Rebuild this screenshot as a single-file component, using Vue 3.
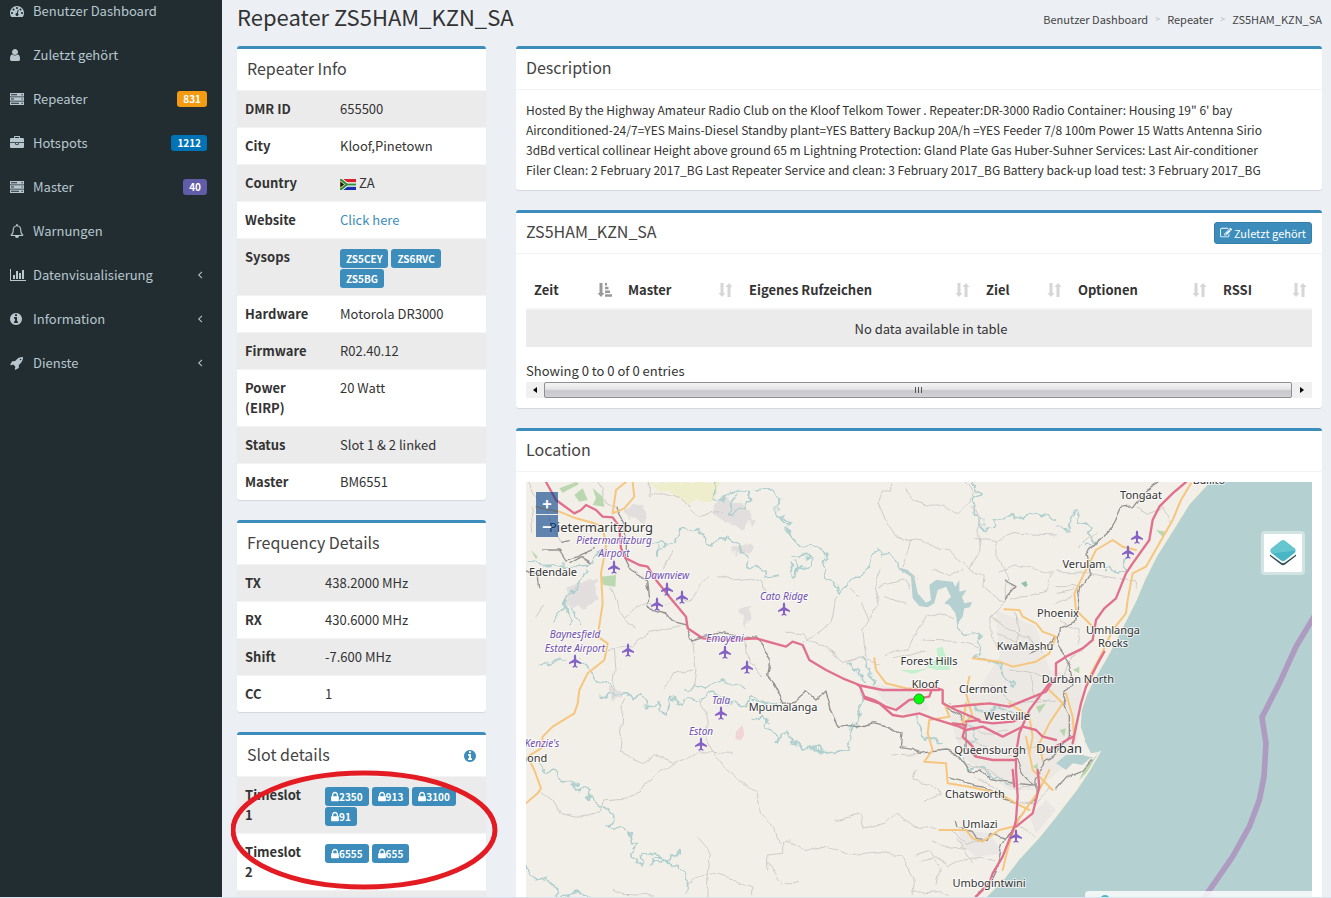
<script setup>
import { h } from 'vue'

// [viewBox, path]
const icons = {
  dashboard: ['0 0 1792 1792', 'M384 1152q0-53-37.5-90.5t-90.5-37.5-90.5 37.5-37.5 90.5 37.5 90.5 90.5 37.5 90.5-37.5 37.5-90.5zm192-448q0-53-37.5-90.5t-90.5-37.5-90.5 37.5-37.5 90.5 37.5 90.5 90.5 37.5 90.5-37.5 37.5-90.5zm428 481l101-382q6-26-7.5-48.5t-38.5-29.5-48 6.5-30 39.5l-101 382q-60 5-107 43.5t-63 98.5q-20 77 20 146t117 89 146-20 89-117q16-60-6-117t-72-91zm660-33q0-53-37.5-90.5t-90.5-37.5-90.5 37.5-37.5 90.5 37.5 90.5 90.5 37.5 90.5-37.5 37.5-90.5zm-640-640q0-53-37.5-90.5t-90.5-37.5-90.5 37.5-37.5 90.5 37.5 90.5 90.5 37.5 90.5-37.5 37.5-90.5zm448 192q0-53-37.5-90.5t-90.5-37.5-90.5 37.5-37.5 90.5 37.5 90.5 90.5 37.5 90.5-37.5 37.5-90.5zm320 448q0 261-141 483-19 29-54 29h-1402q-35 0-54-29-141-221-141-483 0-182 71-348t191-286 286-191 348-71 348 71 286 191 191 286 71 348z'],
  user: ['256 0 1280 1792', 'M1536 1399q0 109-62.5 187t-150.5 78h-854q-88 0-150.5-78t-62.5-187q0-85 8.5-160.5t31.5-152 58.5-131 94-89 134.5-34.5q131 128 313 128t313-128q76 0 134.5 34.5t94 89 58.5 131 31.5 152 8.5 160.5zm-256-887q0 159-112.5 271.5t-271.5 112.5-271.5-112.5-112.5-271.5 112.5-271.5 271.5-112.5 271.5 112.5 112.5 271.5z'],
  server: ['0 0 14 14', 'M0 1h14v3.4H0zM1 2.2v1h6v-1zM11.5 2.1v1.2h1.2V2.1zM0 5.3h14v3.4H0zM1 6.5v1h3v-1zM11.5 6.4v1.2h1.2V6.4zM0 9.6h14V13H0zM1 10.8v1h8v-1zM11.5 10.7v1.2h1.2v-1.2z'],
  briefcase: ['0 0 1792 1792', 'M640 256h512v-128h-512v128zm1152 640v480q0 66-47 113t-113 47h-1472q-66 0-113-47t-47-113v-480h672v160q0 26 19 45t45 19h320q26 0 45-19t19-45v-160h672zm-768 0v128h-256v-128h256zm768-480v384h-1792v-384q0-66 47-113t113-47h352v-160q0-40 28-68t68-28h576q40 0 68 28t28 68v160h352q66 0 113 47t47 113z'],
  bell: ['0 0 14 14', 'M7 0a.9.9 0 0 1 .9.9v.5C10.200 1.800 11.300 3.500 11.300 5.700c0 2.700.8 3.900 2.200 5.100 0 .7-.4 1.100-1 1.100H9A2 2 0 0 1 5 11.900H1.500c-.6 0-1-.4-1-1.100C1.900 9.600 2.700 8.400 2.700 5.700 2.700 3.500 3.800 1.800 6.100 1.400V.9A.9.900 0 0 1 7 0zM2.200 10.900h9.600C10.700 9.700 10.200 8.100 10.200 5.700 10.200 3.600 9 2.300 7 2.300S3.800 3.600 3.800 5.700C3.800 8.100 3.300 9.700 2.200 10.900z'],
  chart: ['0 0 2048 1792', 'M640 896v512h-256v-512h256zm384-512v1024h-256v-1024h256zm1024 1152v128h-2048v-1536h128v1408h1920zm-640-896v768h-256v-768h256zm384-384v1152h-256v-1152h256z'],
  info: ['128 0 1536 1792', 'M1152 1376v-160q0-14-9-23t-23-9h-96v-512q0-14-9-23t-23-9h-320q-14 0-23 9t-9 23v160q0 14 9 23t23 9h96v320h-96q-14 0-23 9t-9 23v160q0 14 9 23t23 9h448q14 0 23-9t9-23zm-128-896v-160q0-14-9-23t-23-9h-192q-14 0-23 9t-9 23v160q0 14 9 23t23 9h192q14 0 23-9t9-23zm640 416q0 209-103 385.5t-279.500 279.500-385.500 103-385.500-103-279.500-279.500-103-385.500 103-385.500 279.500-279.500 385.500-103 385.500 103 279.500 279.500 103 385.500z'],
  rocket: ['0 0 1792 1792', 'M1440 448q0-40-28-68t-68-28-68 28-28 68 28 68 68 28 68-28 28-68zm224-288q0 249-75.5 430.5t-253.5 360.5q-81 80-195 176l-20 379q-2 16-16 26l-384 224q-7 4-16 4-12 0-23-9l-64-64q-13-14-8-32l85-276-281-281-276 85q-3 1-9 1-14 0-23-9l-64-64q-17-19-5-39l224-384q10-14 26-16l379-20q96-114 176-195 188-187 358-258t431-71q14 0 24 9.5t10 22.5z'],
  lock: ['320 0 1152 1792', 'M640 768h512v-192q0-106-75-181t-181-75-181 75-75 181v192zm832 96v576q0 40-28 68t-68 28h-960q-40 0-68-28t-28-68v-576q0-40 28-68t68-28h32v-192q0-184 132-316t316-132 316 132 132 316v192h32q40 0 68 28t28 68z'],
  edit: ['0 0 1792 1792', 'M888 1184l116-116-152-152-116 116v56h96v96h56zm440-720q-16-16-33 1l-350 350q-17 17-1 33t33-1l350-350q17-17 1-33zm80 594v190q0 119-84.5 203.5t-203.5 84.5h-832q-119 0-203.5-84.5t-84.5-203.5v-832q0-119 84.5-203.5t203.5-84.5h832q63 0 117 25 15 7 18 23 3 17-9 29l-49 49q-14 14-32 8-23-6-45-6h-832q-66 0-113 47t-47 113v832q0 66 47 113t113 47h832q66 0 113-47t47-113v-126q0-13 9-22l64-64q15-15 35-7t20 29zm-96-738l288 288-672 672h-288v-288zm444 132l-92 92-288-288 92-92q28-28 68-28t68 28l152 152q28 28 28 68t-28 68z'],
  angle: ['0 0 6 14', 'M4.600 3.500l.7.7L2.500 7l2.800 2.800-.7.7L1 7z'],
  sort: ['0 0 15 14', 'M2.500 0h3v10h2L4 14 .500 10h2zM9.500 14h3V4h2L11 0 7.500 4h2z'],
  sorted: ['0 0 15 14', 'M2.500 0h3v10h2L4 14 .500 10h2zM8 0h2v2.500H8zM8 3.700h3.500v2.500H8zM8 7.400h5v2.500H8zM8 11.200h7v2.500H8z'],
}

const Icon = (props) => {
  const [viewBox, d] = icons[props.name]
  const [, , w, hgt] = viewBox.split(' ').map(Number)
  return h('svg', {
    viewBox,
    width: Math.round((props.size * w) / hgt),
    height: props.size,
    fill: 'currentColor',
    'aria-hidden': 'true',
  }, [h('path', { d, 'fill-rule': 'evenodd' })])
}
Icon.props = ['name', 'size']

const menu = [
  { icon: 'dashboard', text: 'Benutzer Dashboard' },
  { icon: 'user', text: 'Zuletzt gehört' },
  { icon: 'server', text: 'Repeater', count: 831, color: 'orange' },
  { icon: 'briefcase', text: 'Hotspots', count: 1212, color: 'blue' },
  { icon: 'server', text: 'Master', count: 40, color: 'purple' },
  { icon: 'bell', text: 'Warnungen' },
  { icon: 'chart', text: 'Datenvisualisierung', tree: true },
  { icon: 'info', text: 'Information', tree: true },
  { icon: 'rocket', text: 'Dienste', tree: true },
]

const info = [
  { label: 'DMR ID', value: '655500' },
  { label: 'City', value: 'Kloof,Pinetown' },
  { label: 'Country', value: 'ZA', flag: true },
  { label: 'Website', value: 'Click here', link: true },
  { label: 'Sysops', tags: ['ZS5CEY', 'ZS6RVC', 'ZS5BG'] },
  { label: 'Hardware', value: 'Motorola DR3000' },
  { label: 'Firmware', value: 'R02.40.12' },
  { label: 'Power\n(EIRP)', value: '20 Watt' },
  { label: 'Status', value: 'Slot 1 & 2 linked' },
  { label: 'Master', value: 'BM6551' },
]

const freq = [
  { label: 'TX', value: '438.2000 MHz' },
  { label: 'RX', value: '430.6000 MHz' },
  { label: 'Shift', value: '-7.600 MHz' },
  { label: 'CC', value: '1' },
]

const slots = [
  { label: 'Timeslot\n1', groups: [2350, 913, 3100, 91] },
  { label: 'Timeslot\n2', groups: [6555, 655] },
]

const description = [
  'Hosted By the Highway Amateur Radio Club on the Kloof Telkom Tower . Repeater:DR-3000 Radio Container: Housing 19" 6\' bay',
  'Airconditioned-24/7=YES Mains-Diesel Standby plant=YES Battery Backup 20A/h =YES Feeder 7/8 100m Power 15 Watts Antenna Sirio',
  '3dBd vertical collinear Height above ground 65 m Lightning Protection: Gland Plate Gas Huber-Suhner Services: Last Air-conditioner',
  'Filer Clean: 2 February 2017_BG Last Repeater Service and clean: 3 February 2017_BG Battery back-up load test: 3 February 2017_BG',
].join('\n')

const columns = [
  { name: 'Zeit', width: 94, sorted: true },
  { name: 'Master', width: 121 },
  { name: 'Eigenes Rufzeichen', width: 237 },
  { name: 'Ziel', width: 92 },
  { name: 'Optionen', width: 145 },
  { name: 'RSSI', width: 97 },
]

const places = [
  ['Pietermaritzburg', 75, 50, 'city'],
  ['Edendale', 27, 94],
  ['Tongaat', 615, 17],
  ['Ballito', 683, 2],
  ['Verulam', 558, 86],
  ['Phoenix', 532, 135],
  ['KwaMashu', 499, 168],
  ['Umhlanga', 587, 152],
  ['Rocks', 587, 165],
  ['Forest Hills', 403, 183],
  ['Durban North', 552, 201],
  ['Kloof', 399, 206],
  ['Clermont', 457, 211],
  ['Westville', 481, 238],
  ['Queensburgh', 464, 272],
  ['Durban', 533, 271, 'city'],
  ['Chatsworth', 449, 316],
  ['Umlazi', 454, 346],
  ['Umbogintwini', 463, 405],
  ['Mpumalanga', 257, 229],
  ['mond', 6, 280],
  ['Pietermaritzburg', 88, 62, 'air'],
  ['Airport', 88, 75, 'air'],
  ['Dawnview', 141, 97, 'air'],
  ['Cato Ridge', 258, 118, 'air'],
  ['Emoyeni', 199, 160, 'air'],
  ['Baynesfield', 49, 156, 'air'],
  ['Estate Airport', 49, 170, 'air'],
  ['Tala', 195, 222, 'air'],
  ['Eston', 175, 253, 'air'],
  ["Kenzie's", 16, 265, 'air'],
]

const planes = [
  [88, 85], [141, 107], [131, 122], [156, 115], [258, 127], [102, 168], [49, 179],
  [199, 170], [221, 185], [195, 231], [175, 262], [611, 55], [602, 70], [490, 354],
]

const rivers = [
  'M600 36L595 80 620 95 650 60 700 65 690 120 640 130 660 70 M720 60L770 55 800 80 780 120 815 160 830 155 810 145',
  'M400 225L480 215 485 170 520 180 560 190 575 220 620 215 640 195 660 215 690 260 705 300 735 295 750 315 790 310 M425 225V255L440 230',
  'M810 170L830 215 860 230 910 225 935 265 920 290 925 320 960 345 970 375 990 340 1030 320 1060 285 1065 250 1090 240 1100 260 1130 250 1145 290 1165 300',
  'M830 255L885 265 890 285 840 310 835 270 M820 280L830 320 860 290',
  'M1375 36L1395 70 1375 100 1375 135 1400 145 1395 175 1425 180 1445 165 1440 150 1500 140 1520 132 1550 140 1570 130 1620 145',
  'M1620 170L1655 180 1665 150 1680 120 1690 145 1725 180 1710 190 1735 215 1710 230',
  'M160 460L150 390 195 320 210 300 M150 390L118 452 M165 410L188 464 M30 280L90 290 140 285 210 290 235 260 270 235',
  'M65 590L85 575 100 590 130 565 155 570 M190 570L220 595 225 620 270 640 290 660 M510 655L535 650 545 640 560 655 600 640 640 640 680 655',
  'M255 675L290 680 330 665 350 690 380 680 395 710 430 695 430 725 450 735 460 690 500 705 520 680 560 690 590 670 620 675 640 705 690 700 720 685 740 695 800 710',
  'M710 755L740 735 745 765 775 780 780 810 800 790 815 780 830 815 860 840 900 830 950 845 1000 835 995 820 1010 790 1000 770 1020 755 M1010 770L1040 720 1035 660',
  'M75 880L90 885 90 905 130 910 135 935 175 935 185 960 215 955 215 980 240 985 245 1005 270 1015 290 1030 290 1060 270 1070 310 1080 345 1095 350 1115 370 1120 345 1140 350 1165 380 1180 375 1145 420 1140 440 1165 405 1160 405 1180 455 1170 490 1148 M455 1170L480 1200 515 1205 510 1270',
  'M30 1190L60 1230 90 1220 105 1250 135 1280 180 1270 230 1280',
  'M1315 455L1320 475 1340 490 1370 480 1400 490 1390 530 1390 550 1370 560 1440 575 1460 620 1500 640 M1000 580L1030 600 1050 640 M1035 560L1060 600 1080 650',
  'M710 700L740 690 M1200 740L1220 800 1280 815 M1340 840L1360 900 1400 890 1440 930 1500 940 M1350 740L1380 800 1360 820',
  'M1770 310L1770 295 1790 290 1800 310 1830 300 1830 265 M1360 700L1420 735 1450 710 1500 735',
]

const minorRoads = [
  'M400 36L400 80 440 65 490 80 530 110 M530 120L550 140 600 125 620 130 M245 36L262 60 255 85 300 110',
  'M35 36L60 80 90 110 110 180 135 220 M45 110L50 190 M60 440L80 410 M285 355L320 430 355 480 M325 440L390 395 420 410',
  'M450 405L520 385 575 320 M600 320L650 330 700 325 740 335 750 390 M440 300L475 240 M530 510L540 600 530 660 M440 660L470 615 530 600',
  'M280 535L350 525 400 490 490 470 M295 535L300 600 290 660 M690 510L695 570 740 620 M810 490L860 490 890 520 930 530 980 575 1030 560 1090 580',
  'M1130 36L1130 60 1100 60 1085 95 1115 165 1140 200 1185 210 1180 240 1160 290 1200 330 M1170 60L1190 90 1270 110 1330 130 1360 100 1370 60 1350 36',
  'M1180 210L1220 205 1240 220 1275 235 1300 235 1320 260 1365 295 1380 260 1395 220 1385 150 1370 110',
  'M1380 205L1440 215 1500 190 1620 195 M1440 215L1440 265 1475 320 1465 400 1425 445 1425 500 1445 530 M1450 305L1500 285 1560 295 1610 310 1590 360 1480 390',
  'M1365 295L1405 320 1400 350 1460 400 M1340 300L1300 320 1250 300 M960 380L945 460 900 490 870 520',
  'M1000 355L1035 390 1050 430 1060 450 1040 480 1050 560 M1060 450L1090 410 1075 350 1095 300 M1085 350L1160 330 1180 360 M1100 380L1170 400',
  'M1110 560L1180 530 1200 490 1230 440 1290 430 1310 445 M1220 510L1340 515 1390 530 M1130 570L1170 550 1230 550',
  'M320 690L310 845 380 880 420 850 470 880 510 870 550 845 650 850 M550 690L570 725 570 810 600 860 620 890 720 970 740 1030 780 1080 790 1120 820 1110',
  'M470 880L380 950 370 975 320 985 265 990 260 1020 190 1045 130 1030 120 1000 75 965 M545 1105L585 1150 580 1210 575 1280 M585 1210L620 1220 680 1240 710 1250 710 1280 M515 1235L580 1210 M295 1255L320 1270 410 1275',
  'M755 1200L755 1155 800 1150 800 1115 M755 1170L800 1240 M810 1115L850 1130 870 1145 930 1125 1000 1155 1090 1145 1160 1160 1190 1220 1195 1280 M1200 1155L1240 1145 1300 1190 1340 1170 1400 1165 1430 1175 M1195 1270L1270 1265 1300 1280',
  'M960 1050L1030 1035 1040 1075 1110 1060 1140 1030 1190 1065 1260 1075 M1130 855L1220 850 M1200 900L1190 930 1240 940 1270 970 1225 990 M810 1235L850 1235',
  'M1620 305L1690 305 1800 325 1860 330 1865 355 M1690 230L1740 190 M1620 350L1690 350 M1620 370L1680 360 M1620 400L1670 380 M1860 110L1900 130 1940 110 1970 160',
  'M1430 440L1480 480 1540 500 1580 550 M1440 490L1560 540 M1500 430L1510 540 M1540 620L1560 680 1620 700 M1480 600L1600 620 M1420 640L1480 700 1600 690',
  'M1300 700L1340 760 1400 790 1480 780 M1320 800L1400 830 1500 860 1560 820 M1340 880L1420 900 1500 960 1560 940 M1380 920L1450 960 M1490 1000L1560 1000 1600 950',
  'M1310 1090L1350 1130 1400 1110 M1320 1110L1370 1180 M1250 1110L1300 1130 1350 1140 M1210 1180L1250 1160 1270 1190 1260 1240 M1500 1060L1560 1100 M1640 640L1660 560 1700 540 M1630 450L1680 480 1690 520',
]

const darkRoads = [
  'M300 110L325 170 325 260 345 300 395 330 400 380 390 405 410 425 450 435 470 455 510 465 530 510 540 505 600 490 640 495 720 505 765 570 755 610 770 640 800 700 840 690 870 665 900 690 930 660 945 720 970 775 1040 765 1070 755 1120 765 1155 790 1150 830 1190 835 1210 850 1250 845 1290 840 1320 850 1340 875 1360 905 1390 900 1420 925 1500 940 1550 945',
  'M135 220L160 215 M80 240L130 240 150 270 190 260 215 240 235 230 M165 280L200 260 225 275 M30 300L60 310 65 350',
  'M1925 40L1880 70 1850 110 1815 115 1790 170 1740 220 1710 255 1720 310 1695 350 1685 410 1680 450 1630 470 1625 530 1660 580 1670 640 1640 680 1660 740 1660 800 1620 850 1590 870 1560 930 1560 980 1500 1060 1460 1120 1440 1200 1415 1250 1370 1280',
  'M1300 925L1350 940 1420 955 1460 990 1500 1000 M1315 1055L1320 1075 1370 1080 1385 1105 1410 1110 1420 1090 1470 1105 1480 1090 M1500 870L1540 930 1560 945 M1620 960L1650 925 1700 905 1730 870',
  'M1290 710L1330 740 1350 780 1350 830 1370 860 M1465 390L1500 350 1465 330 M1540 550L1590 530 1620 500',
]

const primaryRoads = [
  'M350 36L355 80 325 115 290 130 300 60 330 36 M60 110L130 125 180 145 235 160 260 170 270 230 255 310 260 400 245 500 275 520 265 570 215 610 190 660 185 700 175 730 110 770 80 800 75 835 35 860 55 900 75 955 65 970 30 1000',
  'M2025 40L1995 90 1970 150 1890 290 1850 310 1835 390 1830 430 1790 480 1760 545 1710 640',
  'M1860 240L1820 230 1790 210 1740 240 1700 320 1675 370 1680 420 1710 450 1740 480',
  'M1465 418L1510 420 1520 440 1560 460 1580 485 1620 500 1600 550 1560 575 1490 590 1450 575 1370 565',
  'M1075 565L1080 600 1110 640 1170 655 1250 660 M1285 700L1300 740 1240 750 1235 790 1250 840 1225 875 1290 880 1295 940 1360 950 1450 970 1500 1000 1540 1020',
  'M1360 620L1350 670 1370 740 1340 760 1350 700 M1320 710L1400 700 M1530 800L1550 900 1570 920 1610 960 M1600 660L1640 700 1600 760 1570 820 1580 870',
  'M1270 1080L1350 1080 1370 1105 1400 1115 1450 1080 1490 1070 M1460 1200L1480 1120 1500 1060 1570 960 1600 900 M1650 670L1670 740 1675 810 M1480 700L1540 740 1550 800 1540 850',
]

const motorways = [
  'M90 36L120 90 175 130 195 120 210 105 240 120 260 140 290 142 310 170 315 235 330 265 370 285 395 290 420 330 460 380 510 440 515 475 560 505 640 510 720 505 810 530 830 515 860 525 880 570 930 600 980 625 1030 645 1045 680 1075 690 1110 710 1140 720 1180 690 1240 680 1250 650 1280 660 1280 700 1320 720 1390 750 1390 755 1430 760 1490 755 1540 735',
  'M1025 645L1100 660 1270 660 M1045 685L1090 700 1130 735 1160 740 1210 730 1250 745 1330 770 1350 780 1400 770 1460 800 1520 770 1560 780 1580 800 1620 810',
  'M1310 710L1420 700 1480 710 1540 685 1590 665 1620 620 1620 580 1650 560 1700 535 1730 510 1740 450 1765 415 1800 385 1830 310 1850 280 1900 210 1910 150 1930 110 1970 70 2010 36',
  'M1765 545L1740 590 1710 650 1695 700 1680 770 1670 820 M1600 640L1540 720 1510 790 1500 850 1500 900 1505 980 1500 1050 1495 1070 1460 1160 1430 1210 1420 1240 1380 1280 M1500 1070L1550 1030 1570 950 1565 900',
  'M1310 760L1350 765 1340 800 1370 830 1380 860 1430 870 1500 870 M1490 900L1495 950 M1600 840L1670 800 M1350 755L1390 750',
]
</script>

<template>
  <div class="shell">
    <aside class="sidebar">
      <nav class="menu">
        <a v-for="item in menu" :key="item.text" href="#" class="menu-item">
          <span class="menu-icon"><Icon :name="item.icon" :size="14" /></span>
          <span class="menu-text">{{ item.text }}</span>
          <span v-if="item.count" class="count" :class="item.color">{{ item.count }}</span>
          <Icon v-if="item.tree" class="angle" name="angle" :size="14" />
        </a>
      </nav>
    </aside>

    <main class="content">
      <header class="page-head">
        <h1>Repeater ZS5HAM_KZN_SA</h1>
        <nav class="crumbs">
          <a href="#">Benutzer Dashboard</a>
          <span class="sep">&gt;</span>
          <a href="#">Repeater</a>
          <span class="sep">&gt;</span>
          <a href="#">ZS5HAM_KZN_SA</a>
        </nav>
      </header>

      <div class="columns">
        <div class="column">
          <section class="box">
            <header class="box-head"><h2>Repeater Info</h2></header>
            <table class="details wide">
              <tbody>
                <tr v-for="row in info" :key="row.label">
                  <th scope="row">{{ row.label }}</th>
                  <td v-if="row.tags" class="tag-cell">
                    <div class="tags">
                      <a v-for="tag in row.tags" :key="tag" href="#" class="tag">{{ tag }}</a>
                    </div>
                  </td>
                  <td v-else>
                    <svg v-if="row.flag" class="flag" viewBox="0 0 16 11" aria-hidden="true">
                      <path fill="#fff" d="M0 0h16v11H0z" />
                      <path fill="#d8232f" d="M1 0h15v3.500H6z" />
                      <path fill="#1a2fb0" d="M1 11h15V7.500H6z" />
                      <path fill="none" stroke="#fff" stroke-width="4" d="M0 0l7 5.500h9M0 11l7-5.500" />
                      <path fill="none" stroke="#2f8f3f" stroke-width="2.200" d="M0 0l7 5.500h9M0 11l7-5.500" />
                      <path fill="#111" stroke="#e8c04a" stroke-width=".7" d="M0 2l4.500 3.500L0 9z" />
                    </svg>
                    <a v-if="row.link" href="#" class="link">{{ row.value }}</a>
                    <template v-else>{{ row.value }}</template>
                  </td>
                </tr>
              </tbody>
            </table>
          </section>

          <section class="box">
            <header class="box-head"><h2>Frequency Details</h2></header>
            <table class="details">
              <tbody>
                <tr v-for="row in freq" :key="row.label">
                  <th scope="row">{{ row.label }}</th>
                  <td>{{ row.value }}</td>
                </tr>
              </tbody>
            </table>
          </section>

          <section class="box">
            <header class="box-head">
              <h2>Slot details</h2>
              <button type="button" class="help" aria-label="Info"><Icon name="info" :size="14" /></button>
            </header>
            <table class="details">
              <tbody>
                <tr v-for="slot in slots" :key="slot.label">
                  <th scope="row">{{ slot.label }}</th>
                  <td class="tag-cell">
                    <div class="tags">
                      <a v-for="group in slot.groups" :key="group" href="#" class="tag">
                        <Icon name="lock" :size="12" />{{ group }}
                      </a>
                    </div>
                  </td>
                </tr>
                <tr class="spare"><td colspan="2"></td></tr>
              </tbody>
            </table>
            <svg class="marker" viewBox="0 0 267 120" aria-hidden="true">
              <ellipse cx="133" cy="60" rx="131" ry="57" fill="none" stroke="#e31b23" stroke-width="5" />
            </svg>
          </section>
        </div>

        <div class="column">
          <section class="box">
            <header class="box-head ruled"><h2>Description</h2></header>
            <p class="description">{{ description }}</p>
          </section>

          <section class="box">
            <header class="box-head ruled">
              <h2>ZS5HAM_KZN_SA</h2>
              <button type="button" class="btn"><Icon name="edit" :size="12" />Zuletzt gehört</button>
            </header>
            <div class="box-body">
              <table class="heard">
                <colgroup>
                  <col v-for="col in columns" :key="col.name" :style="{ width: col.width + 'px' }" />
                </colgroup>
                <thead>
                  <tr>
                    <th v-for="col in columns" :key="col.name" scope="col">
                      <button type="button" class="sort" :class="{ active: col.sorted }">
                        {{ col.name }}<Icon :name="col.sorted ? 'sorted' : 'sort'" :size="14" />
                      </button>
                    </th>
                  </tr>
                </thead>
                <tbody>
                  <tr><td colspan="6">No data available in table</td></tr>
                </tbody>
              </table>
              <p class="entries">Showing 0 to 0 of 0 entries</p>
              <div class="scrollbar">
                <button type="button" aria-label="Scroll left"><svg viewBox="0 0 4 6"><path d="M4 0v6L0 3z" /></svg></button>
                <div class="thumb"><i></i><i></i><i></i></div>
                <button type="button" aria-label="Scroll right"><svg viewBox="0 0 4 6"><path d="M0 0v6l4-3z" /></svg></button>
              </div>
            </div>
          </section>

          <section class="box">
            <header class="box-head ruled"><h2>Location</h2></header>
            <div class="box-body">
              <div class="map">
                <svg class="canvas" viewBox="0 0 786 450" preserveAspectRatio="xMinYMin slice">
                  <defs>
                    <!-- bends the plain polylines into meanders -->
                    <filter id="meander" x="0" y="0" width="2400" height="1400" filterUnits="userSpaceOnUse">
                      <feTurbulence type="fractalNoise" baseFrequency=".03" numOctaves="2" seed="4" />
                      <feDisplacementMap in="SourceGraphic" scale="42" xChannelSelector="R" yChannelSelector="G" />
                    </filter>
                    <filter id="bend" x="0" y="0" width="2400" height="1400" filterUnits="userSpaceOnUse">
                      <feTurbulence type="fractalNoise" baseFrequency=".02" numOctaves="2" seed="7" />
                      <feDisplacementMap in="SourceGraphic" scale="24" xChannelSelector="R" yChannelSelector="G" />
                    </filter>
                  </defs>
                  <!-- terrain is drawn at three units per map pixel -->
                  <g transform="translate(-10 -12) scale(.33333)" stroke-linejoin="round" stroke-linecap="round">
                    <path fill="#f2efe9" d="M0 0h2400v1400H0z" />
                    <g fill="#dddadb">
                      <path d="M585 110L620 85 690 105 710 150 680 180 640 160 600 140zM650 230L690 215 710 240 670 255zM155 350L240 325 245 380 200 420 155 400zM320 110L390 100 380 150 340 150zM670 420L710 410 700 460 680 470zM270 660L325 660 320 685 290 690z" opacity=".8" filter="url(#meander)" />
                      <path d="M1060 640L1120 650 1220 670 1240 720 1170 735 1110 700zM1440 420L1560 470 1600 600 1700 620 1690 760 1680 860 1560 960 1480 960 1340 860 1300 740 1400 640 1450 560z" opacity=".3" />
                      <path d="M1330 1080L1420 1090 1460 1150 1380 1160 1330 1120zM1540 1040L1590 990 1620 1020 1560 1090z" opacity=".4" />
                    </g>
                    <g fill="#add1a0" opacity=".8">
                      <path d="M175 75L200 55 215 90 190 95zM230 55L260 80 265 110 230 105 240 85zM255 320L300 315 298 350 262 345zM45 240L65 260 60 268zM130 55L180 36 190 42 140 68z" />
                      <path d="M1560 710L1590 700 1570 730zM1550 890L1565 880 1565 900zM1630 780L1650 775 1645 800zM1750 845L1740 880 1690 930 1700 905zM1920 180L1950 185 1940 200zM1670 600L1690 590 1690 610z" />
                    </g>
                    <path fill="#c5f0cf" d="M1262 535L1280 530 1290 560 1310 570 1300 600 1260 600 1230 590 1265 565zM1150 600L1200 600 1240 595 1190 612z" />
                    <path fill="#8fc3a6" d="M1515 340L1530 333 1535 345 1528 352z" />
                    <path fill="#eeeec0" opacity=".7" d="M400 36H620L600 80 560 95 500 90 450 65 410 60z" filter="url(#meander)" />
                    <path fill="#f1d5d6" d="M660 785L680 765 685 795 675 810 658 808z" />
                    <path fill="#b5d0d0" d="M2080 36L2020 100 1970 180 1920 260 1885 330 1860 390 1830 450 1800 510 1770 565 1735 625 1712 670 1695 720 1692 770 1705 810 1725 850 1752 845 1720 900 1680 960 1620 1038 1570 1100 1510 1165 1460 1230 1390 1300 1390 1400H2400V36z" />
                    <path fill="#b5d0d0" d="M1620 880L1650 855 1700 855 1725 862 1700 885 1670 880 1650 900z" />
                    <path fill="none" stroke="#f4efdf" stroke-width="5" d="M2080 36L2020 100 1970 180 1920 260 1885 330 1860 390 1830 450 1800 510 1770 565 1735 625 1712 670 1695 720 1692 770 1705 810M1752 845L1720 900 1680 960 1620 1038 1570 1100 1510 1165 1460 1230 1390 1300" />
                    <path fill="#b5d0d0" d="M1145 295L1175 300 1195 320 1205 370 1230 398 1245 390 1240 345 1260 330 1310 335 1318 350 1330 330 1330 365 1352 360 1338 380 1345 400 1368 395 1362 412 1345 415 1340 440 1325 460 1318 430 1300 405 1285 400 1305 380 1290 350 1265 360 1255 400 1235 412 1210 408 1190 385 1185 320z" />
                    <g fill="none" stroke="#aecfce" stroke-width="5" filter="url(#meander)"><path v-for="d in rivers" :key="d" :d="d" /></g>
                    <g fill="none" stroke="#cfccc8" stroke-width="3" filter="url(#bend)"><path v-for="d in minorRoads" :key="d" :d="d" /></g>
                    <g fill="none" stroke="#959391" stroke-width="4" filter="url(#bend)"><path v-for="d in darkRoads" :key="d" :d="d" /></g>
                    <g fill="none" stroke="#f6c67e" stroke-width="6"><path v-for="d in primaryRoads" :key="d" :d="d" /></g>
                    <g fill="none" stroke="#e0708c" stroke-width="7"><path v-for="d in motorways" :key="d" :d="d" /></g>
                    <path fill="none" stroke="#ae9bc2" stroke-width="17" d="M2400 430L2340 530 2290 640 2238 742 2250 820 2244 920 2230 990 2200 1070 2150 1160 2060 1290" />
                  </g>
                  <path
                    v-for="([x, y], i) in planes"
                    :key="i"
                    :transform="`translate(${x} ${y})`"
                    fill="#8461c4"
                    d="M0-6.500c.8 0 1.100 1 1.100 2v2.700L6 1.500V3L1.100 1.600l-.2 3 1.600 1.200v1L0 6.100l-2.500.7v-1L-.9 4.600l-.2-3L-6 3V1.500l4.900-3.300v-2.700c0-1 .3-2 1.100-2z"
                  />
                  <text
                    v-for="([text, x, y, kind], i) in places"
                    :key="i"
                    :x="x"
                    :y="y"
                    class="place"
                    :class="kind"
                  >{{ text }}</text>
                  <circle cx="393" cy="217" r="5" fill="#0f0" stroke="#2f9a2f" />
                </svg>
                <div class="zoom">
                  <button type="button" aria-label="Zoom in">+</button>
                  <button type="button" aria-label="Zoom out">−</button>
                </div>
                <button type="button" class="layers" aria-label="Layers">
                  <svg viewBox="0 0 26 26">
                    <path fill="#2c4a55" d="M0 14v2l11 8.500q2 1.300 4 0L26 16v-2z" />
                    <path fill="#fff" d="M0 12v2.500l11 8q2 1.300 4 0l11-8V12z" />
                    <path fill="#48b6c4" d="M11 1q2-1.300 4 0l9.500 7.500q2 2 0 4.500L15 20.500q-2 1.500-4 0L1.500 13q-2-2.500 0-4.500z" />
                    <path fill="#66c6d0" d="M11 1q2-1.300 4 0l9.500 7.500q1 1 1 2L2 13.500l-.5-.5q-2-2.500 0-4.500z" />
                  </svg>
                </button>
                <div class="attribution"><span></span></div>
              </div>
            </div>
          </section>
        </div>
      </div>
    </main>
  </div>
</template>

<style>
body {
  margin: 0;
}
</style>

<style scoped>
.shell {
  display: flex;
  box-sizing: border-box;
  height: 100vh;
  overflow: hidden;
  border-bottom: 1px solid #d9e3ee;
  background: #ecf0f5;
  color: #333;
  font: 13px/20px "Source Sans Pro", "Noto Sans CJK SC", sans-serif;
}
h1,
h2,
p {
  margin: 0;
  font-weight: 400;
}
a {
  color: inherit;
  text-decoration: none;
}
button {
  padding: 0;
  border: 0;
  background: none;
  color: inherit;
  font: inherit;
  cursor: pointer;
}
svg {
  flex: none;
}

.sidebar {
  flex: none;
  width: 222px;
  background: #222d32;
  color: #b8c7ce;
}
.menu {
  display: flex;
  flex-direction: column;
  gap: 24px;
  padding: 1px 15px 0 10px;
}
.menu-item {
  display: flex;
  align-items: center;
  height: 20px;
}
.menu-icon {
  display: flex;
  width: 23px;
}
.menu-text {
  flex: 1;
}
.count {
  padding: 0 6px;
  border-radius: 3px;
  color: #fff;
  font-size: 10px;
  font-weight: 700;
  line-height: 16px;
}
.orange {
  background: #f39c12;
}
.blue {
  background: #0073b7;
}
.purple {
  background: #605ca8;
}
.angle {
  margin-right: 4px;
}

.content {
  flex: 1;
  min-width: 0;
  padding: 0 9px 0 15px;
}
.page-head {
  display: flex;
  justify-content: space-between;
  height: 46px;
}
.page-head h1 {
  font-size: 22px;
  line-height: 32px;
}
.crumbs {
  display: flex;
  gap: 7px;
  color: #444;
  font-size: 11px;
  line-height: 38px;
}
.sep {
  color: #bbb;
  font-size: 9px;
}

.columns {
  display: grid;
  grid-template-columns: minmax(0, 249fr) minmax(0, 806fr);
  gap: 30px;
}
.column {
  display: flex;
  flex-direction: column;
  gap: 20px;
}
.box {
  position: relative;
  border-top: 3px solid #3c8dbc;
  border-radius: 3px;
  background: #fff;
  box-shadow: 0 1px 1px rgba(0, 0, 0, .1);
}
.box-head {
  display: flex;
  align-items: center;
  justify-content: space-between;
  box-sizing: border-box;
  height: 41px;
  padding: 0 10px;
}
.ruled {
  border-bottom: 1px solid #f4f4f4;
}
.box-head h2 {
  padding-bottom: 4px;
  color: #444;
  font-size: 16px;
}
.box-body {
  padding: 10px;
}
.description {
  padding: 10px;
  font-size: 12px;
  white-space: pre-line;
}

table {
  width: 100%;
  border-collapse: collapse;
  table-layout: fixed;
}
.details th,
.details td {
  padding: 8px;
  border-top: 1px solid #f4f4f4;
  text-align: left;
  vertical-align: top;
}
.details th {
  width: 64px;
  white-space: pre-line;
}
.wide th {
  width: 79px;
}
.details tr:nth-child(odd) {
  background: #ebebeb;
}
.details .tag-cell {
  padding: 10px 8px 7px;
}
.spare {
  height: 37px;
}
.tags {
  display: flex;
  flex-wrap: wrap;
  gap: 1px 3px;
}
.tag {
  display: flex;
  align-items: center;
  height: 19px;
  padding: 0 6px;
  border-radius: 3px;
  background: #3c8dbc;
  color: #fff;
  font-size: 10px;
  font-weight: 700;
}
.flag {
  width: 16px;
  height: 11px;
  margin-right: 3px;
  vertical-align: -2px;
}
.link {
  color: #3c8dbc;
}
.help {
  display: flex;
  color: #3c8dbc;
}
.marker {
  position: absolute;
  top: 35px;
  left: -6px;
  width: 267px;
  height: 120px;
  pointer-events: none;
}

.btn {
  display: flex;
  align-items: center;
  gap: 2px;
  height: 22px;
  padding: 0 5px;
  border: 1px solid #367fa9;
  border-radius: 3px;
  background: #3c8dbc;
  color: #fff;
  font-size: 11px;
}
.heard {
  margin-top: 8px;
}
.heard th {
  padding: 8px;
  border-bottom: 2px solid #f4f4f4;
}
.heard th:last-child {
  padding-right: 5px;
}
.heard td {
  padding: 9px 0 8px 24px;
  background: #ebebeb;
  text-align: center;
}
.sort {
  display: flex;
  align-items: center;
  justify-content: space-between;
  width: 100%;
  font-weight: 700;
}
.sort svg {
  color: #d6d6d6;
}
.sort.active svg {
  color: #999;
}
.entries {
  padding: 14px 0 1px;
}
.scrollbar {
  display: flex;
  height: 16px;
  background: #f0f0f0;
}
.scrollbar button {
  display: flex;
  flex: 0 0 18px;
  align-items: center;
  justify-content: center;
}
.scrollbar button:last-child {
  flex-basis: 20px;
}
.scrollbar svg {
  width: 4px;
  height: 6px;
}
.thumb {
  display: flex;
  flex: 1;
  align-items: center;
  justify-content: center;
  gap: 2px;
  border: 1px solid #8e8e93;
  border-radius: 2px;
  background: linear-gradient(#f4f4f4, #e4e4e6 45%, #c9c9cd 55%, #d2d2d6);
}
.thumb i {
  width: 1px;
  height: 6px;
  background: #555;
}

.map {
  position: relative;
  height: 450px;
  overflow: hidden;
  background: #f2efe9;
}
.canvas {
  display: block;
  width: 100%;
  height: 100%;
}
.place {
  fill: #333;
  stroke: rgba(255, 255, 255, .7);
  stroke-width: 2px;
  paint-order: stroke;
  font: 11px "Noto Sans", sans-serif;
  text-anchor: middle;
}
.city {
  font-size: 13px;
}
.air {
  fill: #6f4fae;
  font-size: 10px;
  font-style: italic;
}
.zoom {
  position: absolute;
  top: 10px;
  left: 10px;
  display: grid;
  gap: 1px;
}
.zoom button {
  width: 22px;
  height: 22px;
  background: rgba(0, 60, 136, .6);
  color: #fff;
  font-size: 16px;
  font-weight: 700;
  line-height: 22px;
}
.layers {
  position: absolute;
  top: 49px;
  right: 7px;
  display: grid;
  place-items: center;
  width: 44px;
  height: 44px;
  border: 3px solid rgba(255, 255, 255, .4);
  border-radius: 4px;
  background: #fff;
  background-clip: padding-box;
}
.layers svg {
  width: 26px;
  height: 26px;
}
.attribution {
  position: absolute;
  right: 0;
  bottom: 0;
  width: 227px;
  height: 41px;
  border-radius: 4px 0 0;
  background: rgba(255, 255, 255, .8);
}
.attribution span {
  display: block;
  width: 10px;
  height: 10px;
  margin: 4px 15px;
  border-radius: 50%;
  background: #4bb9c6;
}
</style>
